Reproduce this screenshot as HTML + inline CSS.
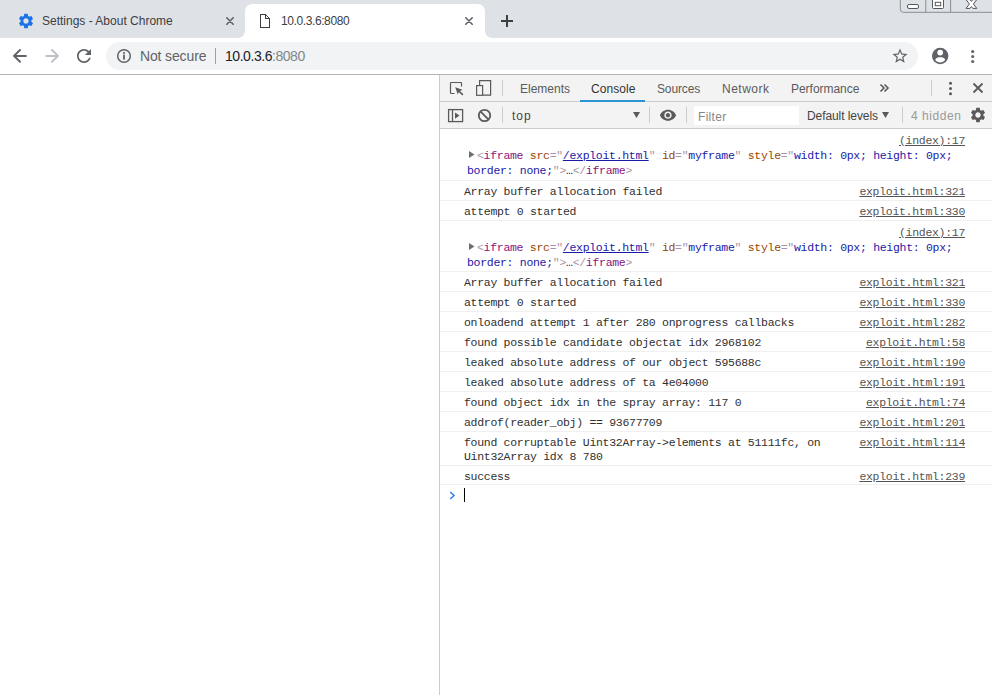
<!DOCTYPE html>
<html><head><meta charset="utf-8">
<style>
*{margin:0;padding:0;box-sizing:border-box}
html,body{width:992px;height:695px;overflow:hidden;background:#fff;font-family:"Liberation Sans",sans-serif}
.abs{position:absolute}
#tabstrip{position:absolute;left:0;top:0;width:992px;height:38px;background:#dee1e6}
#toolbar{position:absolute;left:0;top:38px;width:992px;height:36px;background:#fff}
#tbborder{position:absolute;left:0;top:74px;width:992px;height:1px;background:#b4b4b4}
.ttext{position:absolute;font-size:12px;color:#3c4043;white-space:nowrap;line-height:14px}
#omni{position:absolute;left:106px;top:42px;width:812px;height:28px;border-radius:14px;background:#f1f3f4}
#dt{position:absolute;left:439px;top:75px;width:553px;height:620px;background:#fff;border-left:1px solid #ccc}
.dtbar{position:absolute;left:440px;width:552px;background:#f3f3f3;border-bottom:1px solid #ccc}
.tab{position:absolute;top:82px;font-size:12px;color:#5a5a5a;white-space:nowrap;line-height:14px}
.ln{position:absolute;font-family:"Liberation Mono",monospace;font-size:11.5px;letter-spacing:-0.3px;line-height:15px;color:#303030;white-space:pre}
.src{right:27px;color:#545454;text-decoration:underline}
.bd{position:absolute;left:440px;width:552px;height:1px;background:#f0f0f0}
</style></head><body>
<div id="tabstrip"></div>
<!-- active tab -->
<svg class="abs" style="left:237px;top:0" width="256" height="38" viewBox="0 0 256 38">
  <path d="M0 38 C5 38 8 35 8 30 L8 12 C8 7 11 4 16 4 L240 4 C245 4 248 7 248 12 L248 30 C248 35 251 38 256 38 Z" fill="#fff"/>
</svg>
<!-- inactive tab gear -->
<svg class="abs" style="left:17px;top:12px" width="18" height="18" viewBox="0 0 24 24"><path fill="#1a73e8" d="M19.14 12.94c.04-.3.06-.61.06-.94 0-.32-.02-.64-.07-.94l2.03-1.58a.49.49 0 0 0 .12-.61l-1.92-3.32a.488.488 0 0 0-.59-.22l-2.39.96c-.5-.38-1.03-.7-1.62-.94l-.36-2.54a.484.484 0 0 0-.48-.41h-3.84c-.24 0-.43.17-.47.41l-.36 2.54c-.59.24-1.13.57-1.62.94l-2.39-.96c-.22-.08-.47 0-.59.22L2.74 8.87c-.12.21-.08.47.12.61l2.03 1.58c-.05.3-.09.63-.09.94s.02.64.07.94l-2.03 1.58a.49.49 0 0 0-.12.61l1.92 3.32c.12.22.37.29.59.22l2.39-.96c.5.38 1.03.7 1.62.94l.36 2.54c.05.24.24.41.48.41h3.84c.24 0 .44-.17.47-.41l.36-2.54c.59-.24 1.13-.56 1.62-.94l2.39.96c.22.08.47 0 .59-.22l1.92-3.32c.12-.22.07-.47-.12-.61l-2.01-1.58zM12 15.6c-1.98 0-3.6-1.62-3.6-3.6s1.62-3.6 3.6-3.6 3.6 1.62 3.6 3.6-1.62 3.6-3.6 3.6z"/></svg>
<div class="ttext" style="left:42px;top:14px">Settings - About Chrome</div>
<svg class="abs" style="left:226px;top:17px" width="8" height="8" viewBox="0 0 8 8"><path d="M0.8 0.8L7.2 7.2M7.2 0.8L0.8 7.2" stroke="#5f6368" stroke-width="1.6" stroke-linecap="round"/></svg>
<!-- active tab content -->
<svg class="abs" style="left:259px;top:13px" width="12" height="16" viewBox="0 0 12 16"><path d="M1.5 1.5 H6.5 L10.5 5.5 V14.5 H1.5 Z M6.5 1.5 V5.5 H10.5" fill="none" stroke="#3c4043" stroke-width="1.1" stroke-linejoin="miter" shape-rendering="crispEdges"/></svg>
<div class="ttext" style="left:281px;top:14px;letter-spacing:-0.4px">10.0.3.6:8080</div>
<svg class="abs" style="left:465px;top:17px" width="8" height="8" viewBox="0 0 8 8"><path d="M0.8 0.8L7.2 7.2M7.2 0.8L0.8 7.2" stroke="#5f6368" stroke-width="1.6" stroke-linecap="round"/></svg>
<!-- new tab -->
<svg class="abs" style="left:501px;top:15px" width="12" height="12" viewBox="0 0 12 12"><path d="M6 0V12M0 6H12" stroke="#3c4043" stroke-width="2"/></svg>
<!-- caption buttons -->
<svg class="abs" style="left:899px;top:-6px" width="93" height="20" viewBox="0 0 93 20">
  <path d="M1.3 0 V15 Q1.3 18.3 4.3 18.3 H93" fill="none" stroke="#8a8d92" stroke-width="1"/>
  <path d="M26.8 6 V18 M51.6 6 V18" stroke="#8a8d92" stroke-width="1"/>
  <rect x="8.5" y="10.5" width="11" height="4" rx="1.5" fill="#fff" stroke="#55585c" stroke-width="1"/>
  <rect x="33.5" y="4" width="11" height="10.5" rx="1" fill="#fff" stroke="#55585c" stroke-width="1"/>
  <rect x="36.3" y="8.3" width="5.4" height="3.4" fill="#fff" stroke="#55585c" stroke-width="1"/>
  <path d="M67 14.4 L71 14.4 L72.4 12.6 L73.8 14.4 L77.8 14.4 L74.4 10 L77.8 5.6 L73.8 5.6 L72.4 7.4 L71 5.6 L67 5.6 L70.4 10 Z" fill="#fff" stroke="#55585c" stroke-width="1" stroke-linejoin="round"/>
</svg>
<!-- toolbar -->
<div id="toolbar"></div>
<div id="tbborder"></div>
<svg class="abs" style="left:0;top:38px" width="100" height="36" viewBox="0 38 100 36">
<path d="M25.8 55.9 H14.5 M20 50 L14 55.9 L20 61.8" fill="none" stroke="#5f6368" stroke-width="2" stroke-linecap="round" stroke-linejoin="round"/>
<path d="M46.2 55.9 H57.5 M52 50 L58 55.9 L52 61.8" fill="none" stroke="#bdc1c6" stroke-width="2" stroke-linecap="round" stroke-linejoin="round"/>
<g transform="translate(73.5 45.4) scale(0.875)"><path fill="#5f6368" d="M17.65 6.35C16.2 4.9 14.21 4 12 4c-4.42 0-7.99 3.58-7.99 8s3.57 8 7.99 8c3.73 0 6.84-2.55 7.73-6h-2.08c-.82 2.33-3.04 4-5.65 4-3.31 0-6-2.690-6-6s2.69-6 6-6c1.66 0 3.14.69 4.22 1.78L13 11h7V4l-2.35 2.35z"/></g>
</svg>
<div id="omni"></div>
<svg class="abs" style="left:116px;top:48px" width="16" height="16" viewBox="0 0 16 16"><circle cx="8" cy="8" r="6.3" fill="none" stroke="#5f6368" stroke-width="1.5"/><rect x="7.1" y="6.6" width="1.8" height="5" fill="#5f6368"/><rect x="7.1" y="4" width="1.8" height="1.8" fill="#5f6368"/></svg>
<div class="ttext" style="left:140px;top:48px;font-size:14px;letter-spacing:-0.14px;line-height:16px;color:#5f6368">Not secure</div>
<div class="abs" style="left:215px;top:48px;width:1px;height:16px;background:#9aa0a6"></div>
<div class="ttext" style="left:225px;top:48px;font-size:14px;letter-spacing:-0.45px;line-height:16px;color:#202124">10.0.3.6<span style="color:#80868b">:8080</span></div>
<svg class="abs" style="left:891px;top:47px" width="18" height="18" viewBox="0 0 24 24"><path fill="#5f6368" d="M22 9.24l-7.19-.62L12 2 9.19 8.63 2 9.24l5.46 4.73L5.82 21 12 17.27 18.18 21l-1.63-7.03L22 9.24zM12 15.4l-3.76 2.27 1-4.28-3.32-2.88 4.38-.38L12 6.1l1.71 4.04 4.38.38-3.32 2.88 1 4.28L12 15.4z"/></svg>
<svg class="abs" style="left:930px;top:46px" width="20" height="20" viewBox="0 0 20 20"><circle cx="10.2" cy="10" r="8.2" fill="#5f6368"/><circle cx="10.2" cy="6.6" r="2.9" fill="#fff"/><path d="M5.2 13.8 C6 11.8 8 11.2 10.2 11.2 C12.4 11.2 14.4 11.8 15.2 13.8 C14 15.6 12.2 16.4 10.2 16.4 C8.2 16.4 6.4 15.6 5.2 13.8Z" fill="#fff"/></svg>
<svg class="abs" style="left:970px;top:48px" width="6" height="16" viewBox="0 0 6 16"><circle cx="2.7" cy="3.5" r="1.55" fill="#5f6368"/><circle cx="2.7" cy="8.5" r="1.55" fill="#5f6368"/><circle cx="2.7" cy="13.5" r="1.55" fill="#5f6368"/></svg>

<div id="dt"></div>
<div class="dtbar" style="top:75px;height:27px"></div>
<div class="dtbar" style="top:102px;height:27px"></div>
<!-- tab bar icons -->
<svg class="abs" style="left:440px;top:75px" width="60" height="26" viewBox="440 75 60 26">
<path d="M454.5 93.5 H451.3 Q450.5 93.5 450.5 92.7 V83.3 Q450.5 82.5 451.3 82.5 H460.7 Q461.5 82.5 461.5 83.3 V86.5" fill="none" stroke="#5a5a5a" stroke-width="1.2"/>
<path d="M455.2 87.2 L462.5 89.8 L460 90.9 L463.4 94.3 L462.3 95.4 L458.9 92 L457.8 94.5 Z" fill="#5a5a5a"/>
<path d="M479.6 85 V80.6 H490.6 V95.2 H482.6" fill="none" stroke="#5a5a5a" stroke-width="1.2"/>
<rect x="476.6" y="85.6" width="6" height="9.7" fill="none" stroke="#5a5a5a" stroke-width="1.2"/>
</svg>
<div class="abs" style="left:502px;top:80px;width:1px;height:16px;background:#ccc"></div>
<div class="tab" style="left:520px;letter-spacing:0px">Elements</div>
<div class="tab" style="left:591px;letter-spacing:0.06px;color:#333">Console</div>
<div class="abs" style="left:580px;top:100px;width:65px;height:2px;background:#2a95d6"></div>
<div class="tab" style="left:657px;letter-spacing:-0.13px">Sources</div>
<div class="tab" style="left:722px;letter-spacing:0.5px">Network</div>
<div class="tab" style="left:791px;letter-spacing:-0.03px">Performance</div>
<svg class="abs" style="left:879px;top:83px" width="11" height="10" viewBox="0 0 11 10"><path d="M1.5 1.5 L5 5 L1.5 8.5 M5.5 1.5 L9 5 L5.5 8.5" fill="none" stroke="#5a5a5a" stroke-width="1.6"/></svg>
<div class="abs" style="left:931px;top:80px;width:1px;height:16px;background:#ccc"></div>
<svg class="abs" style="left:948px;top:81px" width="5" height="15" viewBox="0 0 5 15"><circle cx="2.5" cy="2.2" r="1.5" fill="#5a5a5a"/><circle cx="2.5" cy="7.5" r="1.5" fill="#5a5a5a"/><circle cx="2.5" cy="12.8" r="1.5" fill="#5a5a5a"/></svg>
<svg class="abs" style="left:972px;top:82px" width="12" height="12" viewBox="0 0 12 12"><path d="M1.5 1.5 L10.5 10.5 M10.5 1.5 L1.5 10.5" stroke="#5a5a5a" stroke-width="1.8"/></svg>
<!-- console toolbar -->
<svg class="abs" style="left:447px;top:108px" width="17" height="15" viewBox="0 0 17 15"><rect x="1.6" y="1.6" width="14" height="12" fill="none" stroke="#5a5a5a" stroke-width="1.3"/><path d="M5.5 1.6 V13.6" stroke="#5a5a5a" stroke-width="1.3"/><path d="M8 4.5 L12.5 7.6 L8 10.7 Z" fill="#5a5a5a"/></svg>
<svg class="abs" style="left:477px;top:108px" width="15" height="15" viewBox="0 0 15 15"><circle cx="7.5" cy="7.5" r="5.7" fill="none" stroke="#5a5a5a" stroke-width="1.8"/><path d="M3.6 3.6 L11.4 11.4" stroke="#5a5a5a" stroke-width="1.8"/></svg>
<div class="abs" style="left:502px;top:107px;width:1px;height:16px;background:#ccc"></div>
<div class="tab" style="left:512px;top:109px;color:#444;letter-spacing:1px">top</div>
<svg class="abs" style="left:632px;top:111px" width="9" height="8" viewBox="0 0 9 8"><path d="M1 1 H8 L4.5 7 Z" fill="#5a5a5a"/></svg>
<div class="abs" style="left:649px;top:107px;width:1px;height:16px;background:#ccc"></div>
<svg class="abs" style="left:640px;top:102px" width="50" height="26" viewBox="640 102 50 26"><g transform="translate(659.2 106.4) scale(0.732)"><path fill="#5a5a5a" d="M12 4.5C7 4.5 2.73 7.61 1 12c1.73 4.39 6 7.5 11 7.5s9.27-3.11 11-7.5c-1.73-4.39-6-7.5-11-7.5zM12 17c-2.76 0-5-2.24-5-5s2.24-5 5-5 5 2.24 5 5-2.240 5-5 5zm0-8c-1.66 0-3 1.34-3 3s1.34 3 3 3 3-1.34 3-3-1.34-3-3-3z"/></g></svg>
<div class="abs" style="left:686px;top:107px;width:1px;height:16px;background:#ccc"></div>
<div class="abs" style="left:694px;top:106px;width:105px;height:19px;background:#fff"></div>
<div class="tab" style="left:698px;top:110px;color:#878787;letter-spacing:0.3px">Filter</div>
<div class="tab" style="left:807px;top:109px;color:#444;letter-spacing:-0.08px">Default levels</div>
<svg class="abs" style="left:881px;top:111px" width="9" height="8" viewBox="0 0 9 8"><path d="M1 1 H8 L4.5 7 Z" fill="#5a5a5a"/></svg>
<div class="abs" style="left:902px;top:107px;width:1px;height:16px;background:#ccc"></div>
<div class="tab" style="left:911px;top:109px;color:#999;letter-spacing:0.55px">4 hidden</div>
<svg class="abs" style="left:969px;top:106px" width="18" height="18" viewBox="0 0 24 24"><path fill="#5a5a5a" d="M19.14 12.94c.04-.3.06-.61.06-.94 0-.32-.02-.64-.07-.94l2.03-1.58a.49.49 0 0 0 .12-.61l-1.92-3.32a.488.488 0 0 0-.59-.22l-2.39.96c-.5-.38-1.03-.7-1.620-.94l-.36-2.54a.484.484 0 0 0-.48-.41h-3.84c-.24 0-.43.17-.47.41l-.36 2.54c-.59.24-1.13.57-1.62.94l-2.39-.96c-.22-.08-.47 0-.59.22L2.74 8.87c-.12.21-.08.47.12.61l2.03 1.58c-.05.3-.09.63-.09.94s.02.64.07.94l-2.03 1.58a.49.49 0 0 0-.12.61l1.92 3.32c.12.22.37.29.59.22l2.39-.96c.5.38 1.03.7 1.62.94l.36 2.540c.05.24.24.41.48.41h3.84c.24 0 .44-.17.47-.41l.36-2.54c.59-.24 1.13-.56 1.62-.94l2.39.96c.22.08.47 0 .59-.22l1.92-3.32c.12-.22.07-.47-.12-.61l-2.01-1.58zM12 15.6c-1.98 0-3.6-1.62-3.6-3.6s1.62-3.6 3.6-3.6 3.6 1.62 3.6 3.6-1.62 3.6-3.6 3.6z"/></svg>

<!--CONSOLE-->
<div class="ln src" style="top:133px">(index):17</div>
<svg class="abs" style="left:469px;top:151px" width="6" height="7" viewBox="0 0 6 7"><path d="M0 0 L5.5 3.5 L0 7 Z" fill="#6e6e6e"/></svg>
<div class="ln" style="left:477px;top:148px"><span style="color:#a894a6">&lt;</span><span style="color:#881280">iframe</span> <span style="color:#994500">src</span><span style="color:#a894a6">="</span><span style="color:#1a1aa6;text-decoration:underline">/exploit.html</span><span style="color:#a894a6">"</span> <span style="color:#994500">id</span><span style="color:#a894a6">="</span><span style="color:#1a1aa6">myframe</span><span style="color:#a894a6">"</span> <span style="color:#994500">style</span><span style="color:#a894a6">="</span><span style="color:#1a1aa6">width: 0px; height: 0px;</span></div>
<div class="ln" style="left:467px;top:163px"><span style="color:#1a1aa6">border: none;</span><span style="color:#a894a6">"</span><span style="color:#a894a6">&gt;</span><span style="color:#222">…</span><span style="color:#a894a6">&lt;/</span><span style="color:#881280">iframe</span><span style="color:#a894a6">&gt;</span></div>
<div class="bd" style="top:180px"></div>
<div class="ln" style="left:464px;top:184px">Array buffer allocation failed</div>
<div class="ln src" style="top:184px">exploit.html:321</div>
<div class="bd" style="top:200px"></div>
<div class="ln" style="left:464px;top:204px">attempt 0 started</div>
<div class="ln src" style="top:204px">exploit.html:330</div>
<div class="bd" style="top:220px"></div>
<div class="ln src" style="top:225px">(index):17</div>
<svg class="abs" style="left:469px;top:243px" width="6" height="7" viewBox="0 0 6 7"><path d="M0 0 L5.5 3.5 L0 7 Z" fill="#6e6e6e"/></svg>
<div class="ln" style="left:477px;top:240px"><span style="color:#a894a6">&lt;</span><span style="color:#881280">iframe</span> <span style="color:#994500">src</span><span style="color:#a894a6">="</span><span style="color:#1a1aa6;text-decoration:underline">/exploit.html</span><span style="color:#a894a6">"</span> <span style="color:#994500">id</span><span style="color:#a894a6">="</span><span style="color:#1a1aa6">myframe</span><span style="color:#a894a6">"</span> <span style="color:#994500">style</span><span style="color:#a894a6">="</span><span style="color:#1a1aa6">width: 0px; height: 0px;</span></div>
<div class="ln" style="left:467px;top:255px"><span style="color:#1a1aa6">border: none;</span><span style="color:#a894a6">"</span><span style="color:#a894a6">&gt;</span><span style="color:#222">…</span><span style="color:#a894a6">&lt;/</span><span style="color:#881280">iframe</span><span style="color:#a894a6">&gt;</span></div>
<div class="bd" style="top:271px"></div>
<div class="ln" style="left:464px;top:275px">Array buffer allocation failed</div>
<div class="ln src" style="top:275px">exploit.html:321</div>
<div class="bd" style="top:291px"></div>
<div class="ln" style="left:464px;top:295px">attempt 0 started</div>
<div class="ln src" style="top:295px">exploit.html:330</div>
<div class="bd" style="top:311px"></div>
<div class="ln" style="left:464px;top:315px">onloadend attempt 1 after 280 onprogress callbacks</div>
<div class="ln src" style="top:315px">exploit.html:282</div>
<div class="bd" style="top:331px"></div>
<div class="ln" style="left:464px;top:335px">found possible candidate objectat idx 2968102</div>
<div class="ln src" style="top:335px">exploit.html:58</div>
<div class="bd" style="top:351px"></div>
<div class="ln" style="left:464px;top:355px">leaked absolute address of our object 595688c</div>
<div class="ln src" style="top:355px">exploit.html:190</div>
<div class="bd" style="top:371px"></div>
<div class="ln" style="left:464px;top:375px">leaked absolute address of ta 4e04000</div>
<div class="ln src" style="top:375px">exploit.html:191</div>
<div class="bd" style="top:391px"></div>
<div class="ln" style="left:464px;top:395px">found object idx in the spray array: 117 0</div>
<div class="ln src" style="top:395px">exploit.html:74</div>
<div class="bd" style="top:411px"></div>
<div class="ln" style="left:464px;top:415px">addrof(reader_obj) == 93677709</div>
<div class="ln src" style="top:415px">exploit.html:201</div>
<div class="bd" style="top:431px"></div>
<div class="ln" style="left:464px;top:435px">found corruptable Uint32Array-&gt;elements at 51111fc, on</div>
<div class="ln" style="left:464px;top:449px">Uint32Array idx 8 780</div>
<div class="ln src" style="top:435px">exploit.html:114</div>
<div class="bd" style="top:465px"></div>
<div class="ln" style="left:464px;top:469px">success</div>
<div class="ln src" style="top:469px">exploit.html:239</div>
<div class="bd" style="top:484px"></div>
<svg class="abs" style="left:449px;top:490.5px" width="7" height="9" viewBox="0 0 7 9"><path d="M1.2 1 L5 4.5 L1.2 8" fill="none" stroke="#367cf1" stroke-width="1.5"/></svg>
<div class="abs" style="left:464px;top:488px;width:1px;height:14px;background:#000"></div>
</body></html>
